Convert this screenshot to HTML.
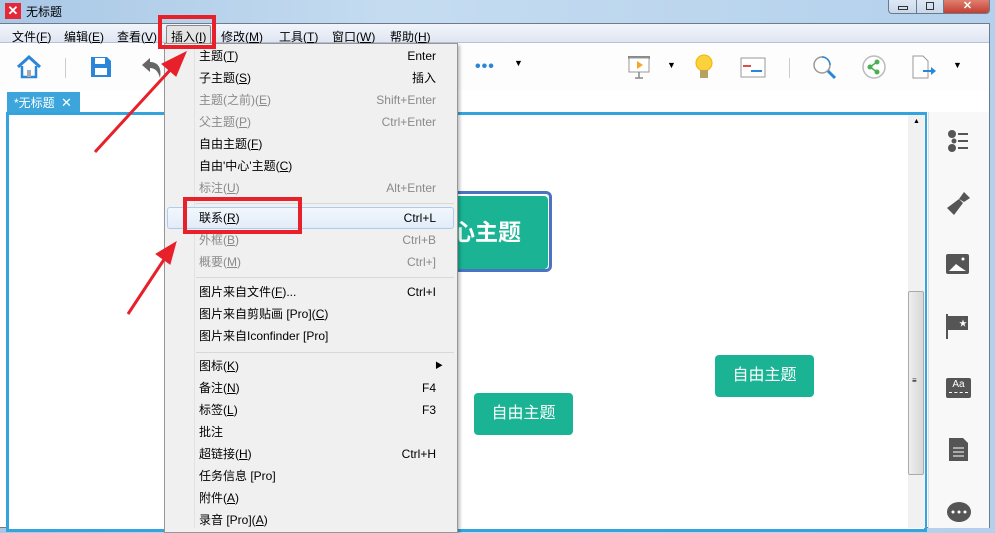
<!DOCTYPE html>
<html><head><meta charset="utf-8"><style>
*{margin:0;padding:0;box-sizing:border-box}
body{width:995px;height:528px;overflow:hidden;position:relative;font-family:"Liberation Sans","Noto Sans CJK SC",sans-serif;font-size:12px;background:linear-gradient(90deg,#a9c8e6,#c5dcf0 40%,#b3d0ec);}
.abs{position:absolute}
.menu span{position:absolute;top:4px;color:#000}
.mi{position:absolute;left:199px;width:237px;height:22px;line-height:22px;font-size:12px;color:#000}
.mi.g{color:#8a8a8a}
.mi b{font-weight:normal;position:absolute;right:0}
.sep{position:absolute;left:196px;width:258px;height:1px;background:#d8d8d8}
.ri{position:absolute;left:946px}
</style></head><body>
<div class="abs" style="left:5px;top:3px;width:16px;height:16px;background:#e3283a;color:#fff;font-size:13px;line-height:16px;text-align:center;font-weight:bold">✕</div>
<div class="abs" style="left:26px;top:3px;font-size:12px">无标题</div>
<div class="abs" style="left:888px;top:0;width:102px;height:14px;border:1px solid #6a7a8e;border-top:none;border-radius:0 0 4px 4px;background:linear-gradient(#dde8f4,#c8d8ea);overflow:hidden">
<div class="abs" style="left:27px;top:0;width:1px;height:14px;background:#6a7a8e"></div>
<div class="abs" style="left:54px;top:0;width:1px;height:14px;background:#6a7a8e"></div>
<div class="abs" style="left:55px;top:0;width:47px;height:14px;background:linear-gradient(#e08070,#c0392b);color:#fff;text-align:center;font-size:11px;line-height:12px;font-weight:bold">✕</div>
<div class="abs" style="left:9px;top:6px;width:10px;height:4px;border:1px solid #333"></div>
<div class="abs" style="left:37px;top:2px;width:8px;height:8px;border:1px solid #333"></div>
</div>
<div class="abs" style="left:0;top:23px;width:990px;height:505px;background:#fff;border:1px solid #6d7b8c;border-left:none"></div>
<div class="abs menu" style="left:0;top:24px;width:989px;height:19px;background:linear-gradient(#f2f5fb,#dfe6f2);border-bottom:1px solid #b8c2d4">
<span style="left:12px">文件(<u>F</u>)</span><span style="left:64px">编辑(<u>E</u>)</span><span style="left:117px">查看(<u>V</u>)</span>
<span style="left:166px;top:1px;padding:2px 4px;border:1px solid #888;background:#e4e4e4;border-radius:2px">插入(<u>I</u>)</span>
<span style="left:221px">修改(<u>M</u>)</span><span style="left:279px">工具(<u>T</u>)</span><span style="left:332px">窗口(<u>W</u>)</span><span style="left:390px">帮助(<u>H</u>)</span>
</div>
<div class="abs" style="left:0;top:44px;width:989px;height:46px;background:#fdfdfd"></div>
<svg class="abs" style="left:16px;top:54px" width="26" height="26" viewBox="0 0 26 26"><path d="M2 13 L13 3 L24 13" fill="none" stroke="#2a86d8" stroke-width="3"/><path d="M6 12 V23 H20 V12" fill="none" stroke="#2a86d8" stroke-width="2.5"/><rect x="11" y="16" width="4" height="7" fill="#aaa"/></svg>
<div class="abs" style="left:65px;top:58px;width:1px;height:20px;background:#ccc"></div>
<svg class="abs" style="left:90px;top:56px" width="22" height="22"><path d="M1 1H17L21 5V21H1Z" fill="#2a86d8"/><rect x="5" y="2" width="10" height="6" fill="#fff"/><rect x="5" y="12" width="12" height="7" fill="#fff"/></svg>
<svg class="abs" style="left:140px;top:56px" width="24" height="24"><path d="M2 9 L10 2 V6 C18 6 22 12 20 22 C18 15 15 12 10 12 V16Z" fill="#666"/></svg>
<div class="abs" style="left:475px;top:58px;color:#2a86d8;font-size:16px;font-weight:bold;letter-spacing:1px">•••</div>
<div class="abs" style="left:514px;top:58px;font-size:9px">▼</div>
<svg class="abs" style="left:626px;top:55px" width="26" height="24"><rect x="2" y="1" width="22" height="3" fill="#888"/><rect x="3" y="3" width="20" height="14" fill="#fff" stroke="#999"/><path d="M11 6 L17 10 L11 14Z" fill="#f5a623"/><path d="M13 17 V23 M9 23 H17" stroke="#888" stroke-width="1.5"/></svg>
<div class="abs" style="left:667px;top:60px;font-size:9px">▼</div>
<svg class="abs" style="left:694px;top:54px" width="20" height="26"><circle cx="10" cy="9" r="8" fill="#fcd23c" stroke="#f0b400"/><rect x="6" y="16" width="8" height="8" fill="#b8a060"/></svg>
<svg class="abs" style="left:740px;top:57px" width="26" height="22"><rect x="1" y="1" width="24" height="19" fill="#fff" stroke="#999"/><path d="M3 9H11" stroke="#e84a4a" stroke-width="2"/><path d="M11 14H22" stroke="#2a86d8" stroke-width="2"/></svg>
<div class="abs" style="left:789px;top:58px;width:1px;height:20px;background:#ccc"></div>
<svg class="abs" style="left:812px;top:55px" width="26" height="26"><circle cx="10" cy="10" r="8" fill="#fff" stroke="#999" stroke-width="1.5"/><path d="M10 2 A8 8 0 0 1 18 10" fill="none" stroke="#2a86d8" stroke-width="1.5"/><path d="M16 16 L23 23" stroke="#2a86d8" stroke-width="3"/></svg>
<svg class="abs" style="left:861px;top:54px" width="26" height="26"><circle cx="13" cy="13" r="11" fill="#fff" stroke="#bbb" stroke-width="1.5"/><circle cx="9" cy="13" r="2.5" fill="#4caf50"/><circle cx="16" cy="8" r="2.5" fill="#4caf50"/><circle cx="16" cy="18" r="2.5" fill="#4caf50"/><path d="M9 13 L16 8 M9 13 L16 18" stroke="#4caf50" stroke-width="1.5"/></svg>
<svg class="abs" style="left:911px;top:54px" width="26" height="26"><path d="M2 2H12L17 7V24H2Z" fill="#fff" stroke="#999"/><path d="M12 17H22" stroke="#2a86d8" stroke-width="2"/><path d="M20 13 L25 17 L20 21Z" fill="#2a86d8"/></svg>
<div class="abs" style="left:953px;top:60px;font-size:9px">▼</div>
<div class="abs" style="left:7px;top:92px;width:73px;height:21px;background:#3ba5dc;color:#fff;font-size:12px;line-height:21px;padding-left:7px">*无标题 <span style="margin-left:3px;font-size:13px">✕</span></div>
<div class="abs" style="left:6px;top:112px;width:921px;height:420px;border:3px solid #35a4de;background:#fff"></div>
<div class="abs" style="left:908px;top:115px;width:17px;height:413px;background:#f1f1f1"></div>
<div class="abs" style="left:913px;top:118px;font-size:7px">▲</div>
<div class="abs" style="left:908px;top:291px;width:16px;height:184px;border:1px solid #aaa;border-radius:2px;background:linear-gradient(90deg,#eee,#d8d8d8)"></div>
<div class="abs" style="left:912px;top:376px;font-size:8px">≡</div>
<div class="abs" style="left:928px;top:112px;width:61px;height:416px;background:#f8f8f8;border-left:1px solid #ddd"></div>
<svg class="ri" style="top:128px" width="26" height="26"><circle cx="6" cy="6" r="4" fill="#555"/><circle cx="8" cy="13" r="2.5" fill="#555"/><circle cx="6" cy="20" r="4" fill="#555"/><path d="M12 6H22M12 13H22M12 20H22" stroke="#555" stroke-width="2"/></svg>
<svg class="ri" style="top:190px" width="26" height="28"><path d="M18 2 L24 8 L18 12 L13 9Z" fill="#555"/><path d="M13 9 L17 13 L8 25 L1 18Z" fill="#555"/></svg>
<svg class="ri" style="top:254px" width="24" height="22"><rect x="0" y="0" width="23" height="20" rx="2" fill="#555"/><path d="M3 17 L10 10 L14 13 L20 17Z" fill="#fff"/><circle cx="17" cy="5" r="1.5" fill="#fff"/></svg>
<svg class="ri" style="top:314px" width="24" height="26"><rect x="0" y="0" width="2" height="25" fill="#555"/><rect x="2" y="2" width="20" height="14" fill="#555"/><text x="13" y="12" font-size="8" fill="#fff">★</text></svg>
<div class="ri" style="top:378px;width:25px;height:20px;background:#555;color:#fff;font-size:10px;text-align:center;border-radius:2px;line-height:14px">Aa<div style="border-top:1px dashed #fff;margin:0 3px"></div></div>
<svg class="ri" style="top:438px;left:949px" width="20" height="24"><path d="M0 0H14L19 5V23H0Z" fill="#555"/><path d="M4 10H15M4 14H15M4 18H15" stroke="#fff"/></svg>
<svg class="ri" style="top:500px" width="26" height="24"><ellipse cx="13" cy="12" rx="12" ry="10" fill="#555"/><circle cx="7" cy="12" r="1.5" fill="#fff"/><circle cx="13" cy="12" r="1.5" fill="#fff"/><circle cx="19" cy="12" r="1.5" fill="#fff"/></svg>
<div class="abs" style="left:449px;top:191px;width:103px;height:81px;border:3px solid #4a73c4;border-radius:6px;background:#fff"></div>
<div class="abs" style="left:452px;top:196px;width:96px;height:73px;background:#1ab394;border-radius:4px;color:#fff;font-size:23px;font-weight:bold;line-height:73px;text-align:right;padding-right:38px;overflow:hidden;white-space:nowrap">心主题</div>
<div class="abs" style="left:715px;top:355px;width:99px;height:42px;background:#1ab394;border-radius:4px;color:#fff;font-size:16px;line-height:42px;text-align:center">自由主题</div>
<div class="abs" style="left:474px;top:393px;width:99px;height:42px;background:#1ab394;border-radius:4px;color:#fff;font-size:16px;line-height:42px;text-align:center">自由主题</div>
<div class="abs" style="left:164px;top:43px;width:294px;height:490px;background:#f0f0f0;border:1px solid #979797;box-shadow:2px 2px 3px rgba(0,0,0,.25)"></div>
<div class="abs" style="left:194px;top:44px;width:1px;height:484px;background:#e2e2e2"></div>
<div class="abs" style="left:167px;top:207px;width:287px;height:22px;border:1px solid #aeccee;border-radius:3px;background:linear-gradient(#f2f7fd,#e2ecf8)"></div>
<div class="mi" style="top:45px">主题(<u>T</u>)<b>Enter</b></div>
<div class="mi" style="top:67px">子主题(<u>S</u>)<b>插入</b></div>
<div class="mi g" style="top:89px">主题(之前)(<u>E</u>)<b>Shift+Enter</b></div>
<div class="mi g" style="top:111px">父主题(<u>P</u>)<b>Ctrl+Enter</b></div>
<div class="mi" style="top:133px">自由主题(<u>F</u>)</div>
<div class="mi" style="top:155px">自由'中心'主题(<u>C</u>)</div>
<div class="mi g" style="top:177px">标注(<u>U</u>)<b>Alt+Enter</b></div>
<div class="sep" style="top:203px"></div>
<div class="mi" style="top:207px">联系(<u>R</u>)<b>Ctrl+L</b></div>
<div class="mi g" style="top:229px">外框(<u>B</u>)<b>Ctrl+B</b></div>
<div class="mi g" style="top:251px">概要(<u>M</u>)<b>Ctrl+]</b></div>
<div class="sep" style="top:277px"></div>
<div class="mi" style="top:281px">图片来自文件(<u>F</u>)...<b>Ctrl+I</b></div>
<div class="mi" style="top:303px">图片来自剪贴画 [Pro](<u>C</u>)</div>
<div class="mi" style="top:325px">图片来自Iconfinder [Pro]</div>
<div class="sep" style="top:352px"></div>
<div class="mi" style="top:355px">图标(<u>K</u>)<b style="font-size:8px;right:-7px">▶</b></div>
<div class="mi" style="top:377px">备注(<u>N</u>)<b>F4</b></div>
<div class="mi" style="top:399px">标签(<u>L</u>)<b>F3</b></div>
<div class="mi" style="top:421px">批注</div>
<div class="mi" style="top:443px">超链接(<u>H</u>)<b>Ctrl+H</b></div>
<div class="mi" style="top:465px">任务信息 [Pro]</div>
<div class="mi" style="top:487px">附件(<u>A</u>)</div>
<div class="mi" style="top:509px">录音 [Pro](<u>A</u>)</div>
<div class="abs" style="left:158px;top:15px;width:58px;height:34px;border:4px solid #e8202a"></div>
<div class="abs" style="left:183px;top:197px;width:119px;height:37px;border:4px solid #e8202a"></div>
<svg class="abs" style="left:0;top:0" width="995" height="528"><g fill="#e8202a" stroke="#e8202a"><path d="M95 152 L172 68" stroke-width="3"/><path d="M186 52 L162 64 L176 76Z"/><path d="M128 314 L165 258" stroke-width="3"/><path d="M176 242 L156 254 L170 264Z"/></g></svg>
</body></html>
